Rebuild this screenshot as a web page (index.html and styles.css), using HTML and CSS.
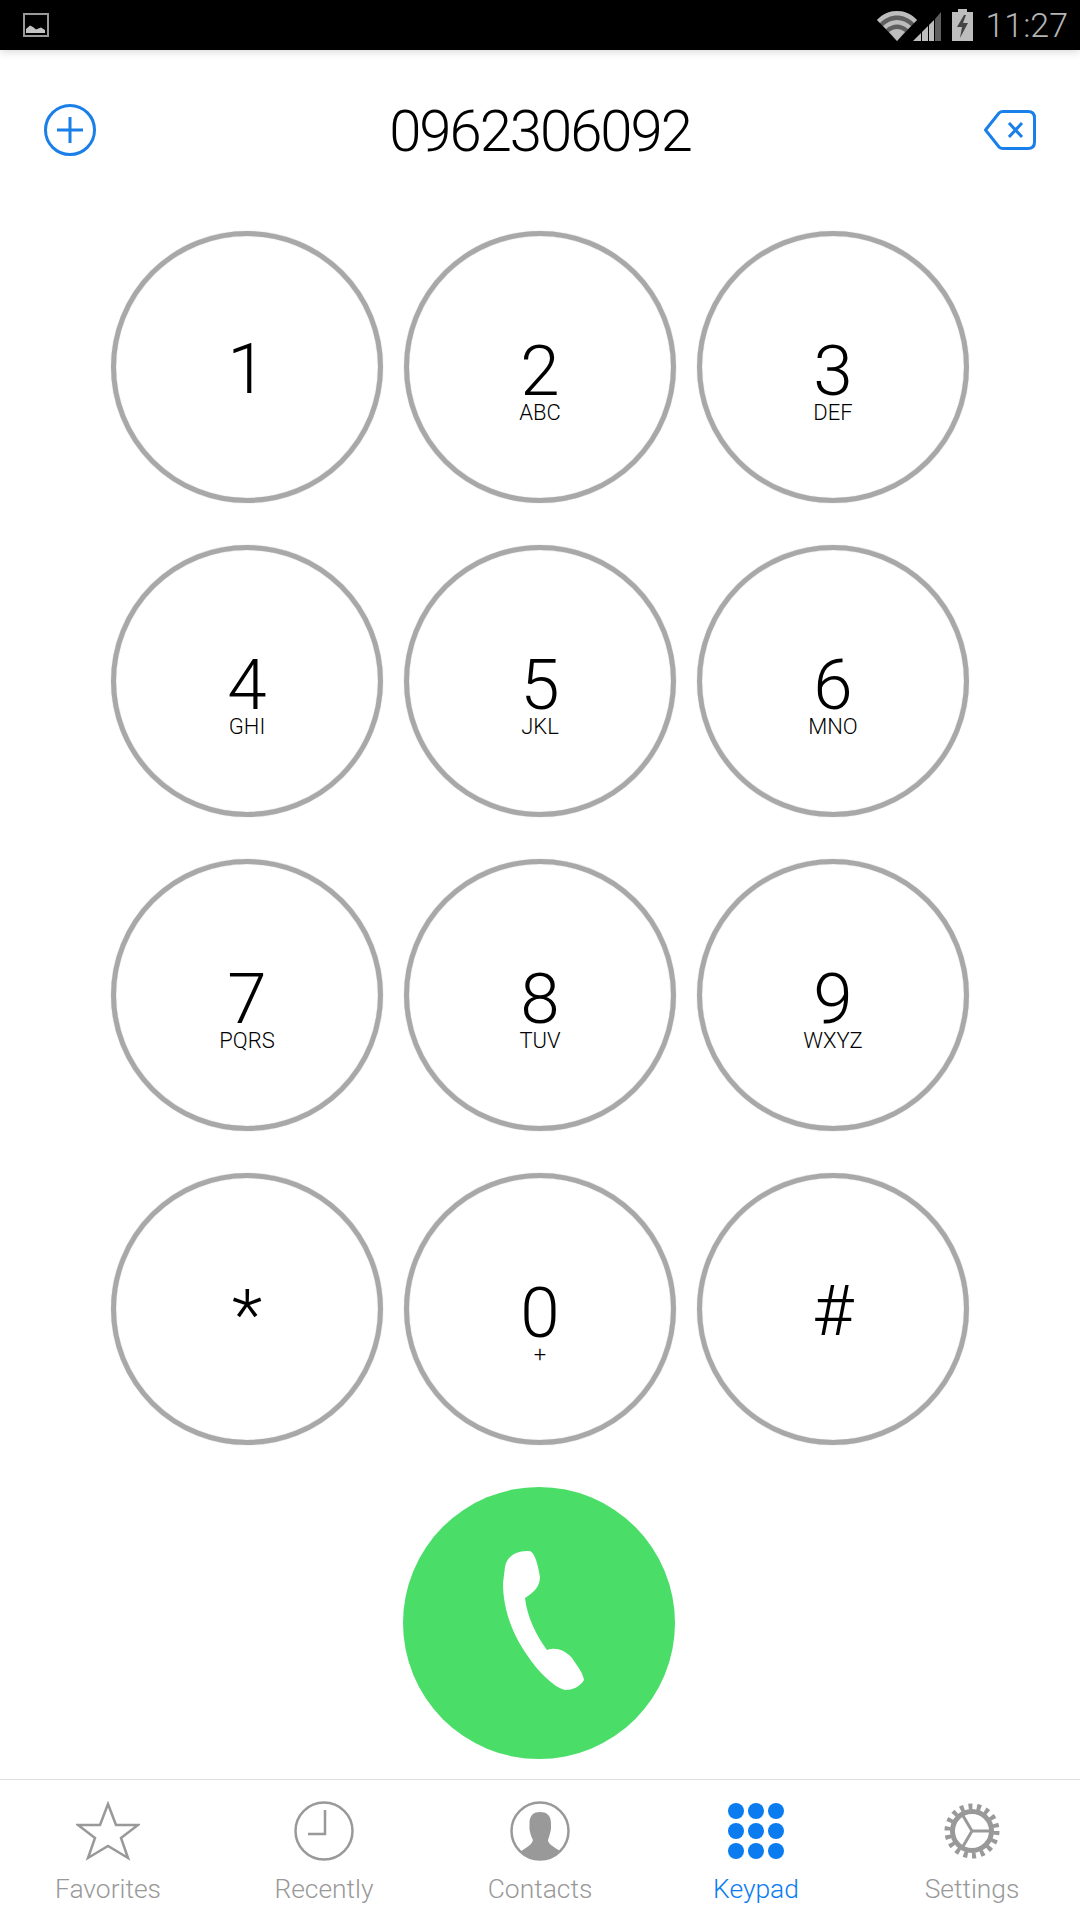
FILE: index.html
```html
<!DOCTYPE html>
<html lang="en">
<head>
    <meta charset="UTF-8">
    <meta name="viewport" content="width=device-width, initial-scale=1.0">
    <title>Keypad</title>
    <link rel="stylesheet" href="styles.css">
</head>
<body>
    <!-- Status bar -->
    <div class="status-bar">
        <svg class="status-picture" viewBox="0 0 26 24">
            <rect x="1" y="1" width="24" height="22" fill="none" stroke="#9a9a9a" stroke-width="2"/>
            <path d="M3 20V16L7 12.5L10 14L13 16.5L18 14.5L22 17V20Z" fill="#c4c4c4"/>
        </svg>
        <div class="status-right">
            <svg class="status-wifi" viewBox="0 0 40 30">
                <path d="M0 9C11 -3 29 -3 40 9L20 30Z" fill="#5e5e5e"/>
                <path d="M0 9C11 -3 29 -3 40 9L37 12C27 2 13 2 3 12Z" fill="#bdbdbd"/>
                <path d="M6 15C14 7 26 7 34 15L31 18C24 12 16 12 9 18Z" fill="#bdbdbd"/>
                <path d="M12 21C17 17 23 17 28 21L20 30Z" fill="#bdbdbd"/>
            </svg>
            <svg class="status-signal" viewBox="0 0 28 32">
                <path d="M0 32L8 24V32Z" fill="#bdbdbd"/>
                <path d="M9 23L15 17V32H9Z" fill="#bdbdbd"/>
                <path d="M16 16L21 11V32H16Z" fill="#bdbdbd"/>
                <path d="M22 10L28 3V32H22Z" fill="#5e5e5e"/>
            </svg>
            <svg class="status-battery" viewBox="0 0 21 32">
                <path d="M6 0H15V3H21V32H0V3H6Z" fill="#bdbdbd"/>
                <path d="M12 6L5 18H10L8 29L16 14H11L14 6Z" fill="#444"/>
            </svg>
            <span class="status-time">11:27</span>
        </div>
    </div>

    <!-- Number display -->
    <div class="display">
        <svg class="display-icon" viewBox="0 0 52 52">
            <circle cx="26" cy="26" r="24.5" fill="none" stroke="#1a7fe8" stroke-width="3"/>
            <path d="M26 13V39M13 26H39" fill="none" stroke="#1a7fe8" stroke-width="3"/>
        </svg>
        <div class="display-number">0962306092</div>
        <svg class="display-icon" viewBox="0 0 52 40">
            <path d="M1.5 20L15 3Q16.5 1.5 19 1.5H44Q50.5 1.5 50.5 8V32Q50.5 38.5 44 38.5H19Q16.5 38.5 15 37Z" fill="none" stroke="#1a7fe8" stroke-width="3"/>
            <path d="M25 13L38 27M38 13L25 27" fill="none" stroke="#1a7fe8" stroke-width="3"/>
        </svg>
    </div>

    <!-- Keypad -->
    <div class="keypad">
        <div class="key"><span class="digit">1</span></div>
        <div class="key"><span class="digit">2</span><span class="letters">ABC</span></div>
        <div class="key"><span class="digit">3</span><span class="letters">DEF</span></div>
        <div class="key"><span class="digit">4</span><span class="letters">GHI</span></div>
        <div class="key"><span class="digit">5</span><span class="letters">JKL</span></div>
        <div class="key"><span class="digit">6</span><span class="letters">MNO</span></div>
        <div class="key"><span class="digit">7</span><span class="letters">PQRS</span></div>
        <div class="key"><span class="digit">8</span><span class="letters">TUV</span></div>
        <div class="key"><span class="digit">9</span><span class="letters">WXYZ</span></div>
        <div class="key"><span class="digit digit-star">*</span></div>
        <div class="key"><span class="digit">0</span><span class="letters">+</span></div>
        <div class="key"><span class="digit">#</span></div>
    </div>

    <div class="call-row">
        <div class="call-button">
            <svg class="call-icon" viewBox="13 17 272 272">
                <path d="M115 97C117 85 128 80 140 81C145 83 148 95 150 107C150 117 143 123 135 128C137 147 147 167 157 180C165 177 175 180 182 188C188 197 193 203 194 210C190 217 182 220 175 220C163 217 147 200 137 185C123 165 113 140 113 113Z" fill="#fff"/>
            </svg>
        </div>
    </div>

    <!-- Tab bar -->
    <div class="tabs">
        <div class="tab">
            <svg class="tab-icon tab-icon-star" viewBox="0 0 64 60">
                <path d="M32 3L40 24H62L45 37L52 57L32 45L12 57L19 37L2 24H24Z" fill="none" stroke="#999" stroke-width="2.5"/>
            </svg>
            <span class="tab-label">Favorites</span>
        </div>
        <div class="tab">
            <svg class="tab-icon" viewBox="0 0 60 60">
                <circle cx="30" cy="30" r="28.5" fill="none" stroke="#999" stroke-width="2.5"/>
                <path d="M31 9V33H14" fill="none" stroke="#999" stroke-width="2.5"/>
            </svg>
            <span class="tab-label">Recently</span>
        </div>
        <div class="tab">
            <svg class="tab-icon" viewBox="0 0 60 60">
                <circle cx="30" cy="30" r="28.5" fill="#fff" stroke="#999" stroke-width="2.5"/>
                <path d="M19.5 22C19.5 14 24 11 30 11C36 11 41 14 41 22V28C40 33 39 36 38 39C38 43 44 46 50 50C44 56 37 59 30 59C22 59 15 56 10 51C15 47 22 44 23 39C21 35 20 32 19.5 28Z" fill="#999"/>
            </svg>
            <span class="tab-label">Contacts</span>
        </div>
        <div class="tab tab-active">
            <svg class="tab-icon" viewBox="0 0 60 60">
                <g fill="#0a7cf0">
                    <circle cx="10" cy="10" r="8"/><circle cx="30" cy="10" r="8"/><circle cx="50" cy="10" r="8"/>
                    <circle cx="10" cy="30" r="8"/><circle cx="30" cy="30" r="8"/><circle cx="50" cy="30" r="8"/>
                    <circle cx="10" cy="50" r="8"/><circle cx="30" cy="50" r="8"/><circle cx="50" cy="50" r="8"/>
                </g>
            </svg>
            <span class="tab-label">Keypad</span>
        </div>
        <div class="tab">
            <svg class="tab-icon" viewBox="0 0 60 60">
                <circle cx="30" cy="30" r="19.5" fill="none" stroke="#999" stroke-width="5"/>
                <circle cx="30" cy="30" r="24.5" fill="none" stroke="#999" stroke-width="6" stroke-dasharray="4 4.55"/>
                <path d="M30 30H50M30 30L20 13M30 30L20 47" fill="none" stroke="#999" stroke-width="3"/>
            </svg>
            <span class="tab-label">Settings</span>
        </div>
    </div>
</body>
</html>
```

FILE: styles.css
```css
body {
    font-family: Roboto, "Liberation Sans", sans-serif;
    font-weight: 300;
    margin: 0;
    width: 1080px;
    height: 1920px;
    display: flex;
    flex-direction: column;
    background: #fff;
    overflow: hidden;
}

/* Status bar */
.status-bar {
    height: 50px;
    background: #000;
    display: flex;
    justify-content: space-between;
    align-items: center;
    padding: 0 12px 0 23px;
    box-shadow: 0 2px 8px rgba(0, 0, 0, 0.15);
}
.status-picture {
    width: 26px;
    height: 24px;
}
.status-right {
    display: flex;
    align-items: center;
}
.status-wifi {
    width: 40px;
    height: 30px;
    margin-top: 1px;
}
.status-signal {
    width: 28px;
    height: 32px;
    margin-left: -4px;
}
.status-battery {
    width: 21px;
    height: 32px;
    margin-left: 11px;
}
.status-time {
    color: #b4b4b4;
    font-size: 34px;
    margin-left: 12px;
}

/* Number display */
.display {
    box-sizing: border-box;
    height: 131px;
    display: flex;
    justify-content: space-between;
    align-items: center;
    padding: 29px 44px 0;
}
.display-icon {
    width: 52px;
    height: 52px;
}
.display-number {
    color: #000;
    font-size: 58px;
    letter-spacing: -2px;
    margin-top: 2px;
}

/* Keypad */
.keypad {
    display: grid;
    grid-template-columns: repeat(3, 272px);
    grid-auto-rows: 272px;
    column-gap: 21px;
    row-gap: 42px;
    justify-content: center;
    margin-top: 50px;
}
.key {
    box-sizing: border-box;
    border: 5px solid #a8a8a8;
    border-radius: 50%;
    box-shadow: 0 0 1px #a8a8a8, inset 0 0 1px #a8a8a8;
    padding-top: 3px;
    display: flex;
    flex-direction: column;
    align-items: center;
    justify-content: center;
    color: #000;
}
.digit {
    font-size: 71px;
    line-height: 70px;
}
.digit-star {
    margin-top: 8px;
}
.letters {
    font-size: 22px;
    line-height: 24px;
    margin-top: -5px;
    margin-bottom: -23px;
}

/* Call button */
.call-row {
    display: flex;
    justify-content: center;
    margin-top: 42px;
    padding-right: 2px;
}
.call-button {
    width: 272px;
    height: 272px;
    border-radius: 50%;
    background: #4ade68;
}
.call-icon {
    display: block;
    width: 272px;
    height: 272px;
}

/* Tab bar */
.tabs {
    margin-top: 20px;
    border-top: 1px solid #e0e0e0;
    display: grid;
    grid-template-columns: repeat(5, 216px);
}
.tab {
    display: flex;
    flex-direction: column;
    align-items: center;
    padding-top: 21px;
    color: #999;
}
.tab-icon {
    width: 60px;
    height: 60px;
}
.tab-icon-star {
    width: 64px;
}
.tab-label {
    font-size: 26.4px;
    line-height: 30px;
    margin-top: 13px;
}
.tab-active {
    color: #0a7cf0;
}
```
